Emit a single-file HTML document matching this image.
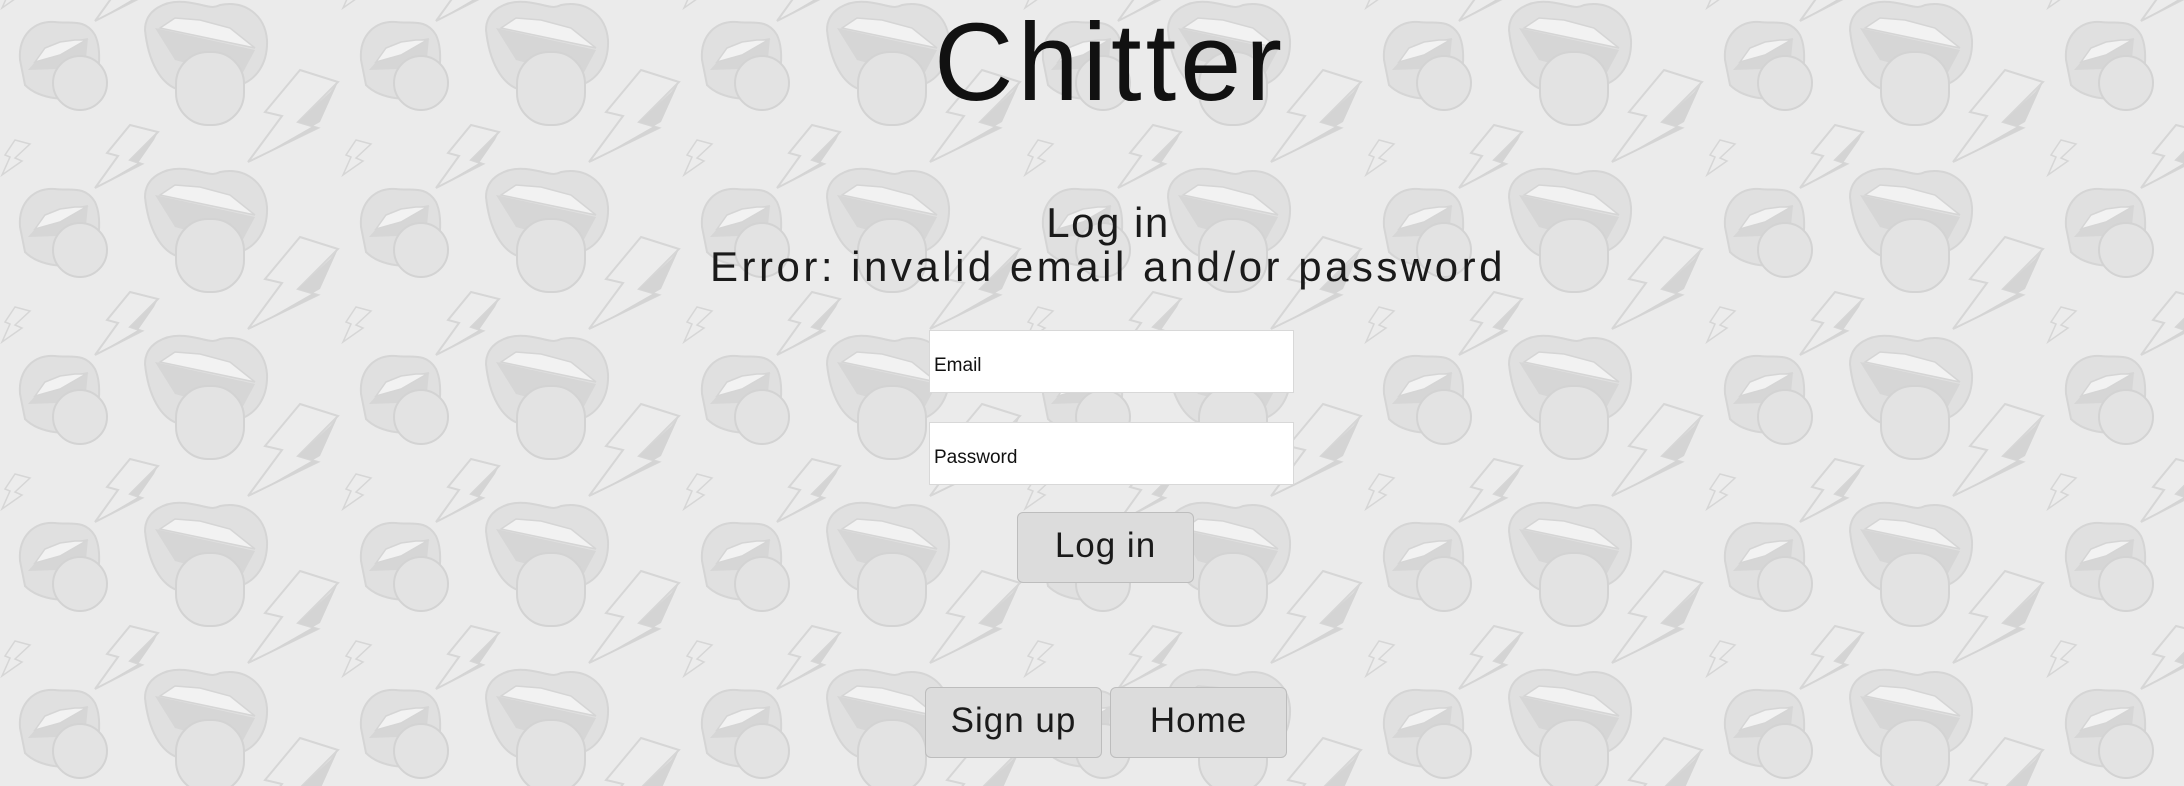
<!DOCTYPE html>
<html><head><meta charset="utf-8">
<style>
html,body{margin:0;padding:0;width:2184px;height:786px;overflow:hidden;background:#ebebeb;font-family:"Liberation Sans",sans-serif;}
#bg{position:absolute;left:0;top:0}
.t{position:absolute;left:0;width:2184px;text-align:center;color:#111;font-weight:300;}
.inp{position:absolute;left:929px;width:363px;height:61px;background:#fff;border:1px solid #d8d8d8;font-size:19px;color:#111;box-sizing:content-box}
.inp span{position:absolute;left:4px;top:24px}
.btn{position:absolute;height:69px;width:175px;background:#dcdcdc;border:1px solid #bdbdbd;border-radius:6px;font-size:35px;color:#1a1a1a;text-align:center;line-height:66px;letter-spacing:1px}
</style></head><body>
<svg id="bg" width="2184" height="786" xmlns="http://www.w3.org/2000/svg">
<defs>
<g id="sm">
<path d="M20 60 C18 35 35 20 55 22 C70 24 85 18 95 35 C102 50 100 80 90 95 C70 102 40 100 25 85 Z" fill="#e0e0e0" stroke="#d5d5d5" stroke-width="2"/>
<path d="M28 70 L50 45 L88 38 L85 68 Z" fill="#d6d6d6"/>
<path d="M35 62 L45 48 L60 42 L75 40 L86 40 L60 55 Z" fill="#f2f2f2" stroke="#d5d5d5" stroke-width="1.5"/>
<circle cx="80" cy="83" r="27" fill="#e3e3e3" stroke="#d3d3d3" stroke-width="2"/>
</g>
<g id="bm">
<path d="M145 30 C145 10 165 0 185 2 C205 4 210 10 220 5 C245 0 265 15 267 40 C268 65 255 80 240 85 L180 90 C160 85 148 60 145 30 Z" fill="#e0e0e0" stroke="#d5d5d5" stroke-width="2"/>
<path d="M155 28 L255 50 L240 78 L175 60 Z" fill="#d6d6d6"/>
<path d="M160 28 L175 18 L200 20 L230 28 L255 48 Z" fill="#f2f2f2" stroke="#d5d5d5" stroke-width="1.5"/>
<rect x="176" y="52" width="68" height="73" rx="32" fill="#e3e3e3" stroke="#d3d3d3" stroke-width="2"/>
</g>
<g id="bl">
<polygon points="300,70 338,82 298,122 318,128 248,162 282,116 265,112" fill="#ececec" stroke="#d6d6d6" stroke-width="2"/>
<polygon points="338,82 330,92 298,122 318,128 250,162 320,122" fill="#d4d4d4"/>
</g>
<g id="ml">
<polygon points="130,125 158,132 130,160 142,164 95,188 118,156 107,153" fill="#ececec" stroke="#d6d6d6" stroke-width="2"/>
<polygon points="158,132 130,160 142,164 97,187 138,163 154,140" fill="#d4d4d4"/>
</g>
<g id="tl">
<polygon points="15,140 30,144 15,158 22,161 2,175 10,157 5,155" fill="#ececec" stroke="#d6d6d6" stroke-width="1.5"/>
</g>
<g id="tile">
<use href="#sm"/><use href="#bm"/><use href="#bl"/><use href="#ml"/><use href="#tl"/>
<use href="#bl" y="-167"/><use href="#ml" y="-167"/><use href="#tl" y="-167"/>
</g>
<pattern id="p" width="341" height="167" patternUnits="userSpaceOnUse" x="0" y="0">
<use href="#tile"/>
</pattern>
</defs>
<rect width="2184" height="786" fill="#ebebeb"/>
<rect width="2184" height="786" fill="url(#p)"/>
</svg>
<div class="t" style="top:0px;font-size:110px;line-height:126px;letter-spacing:4px;left:18px">Chitter</div>
<div class="t" style="top:201px;font-size:42px;line-height:44px;letter-spacing:1.5px;left:16px;color:#1a1a1a">Log in<br><span style="letter-spacing:3.5px">Error: invalid email and/or password</span></div>
<div class="inp" style="top:330px"><span>Email</span></div>
<div class="inp" style="top:422px"><span>Password</span></div>
<div class="btn" style="left:1017px;top:512px">Log in</div>
<div class="btn" style="left:925px;top:687px">Sign up</div>
<div class="btn" style="left:1110px;top:687px">Home</div>
</body></html>
